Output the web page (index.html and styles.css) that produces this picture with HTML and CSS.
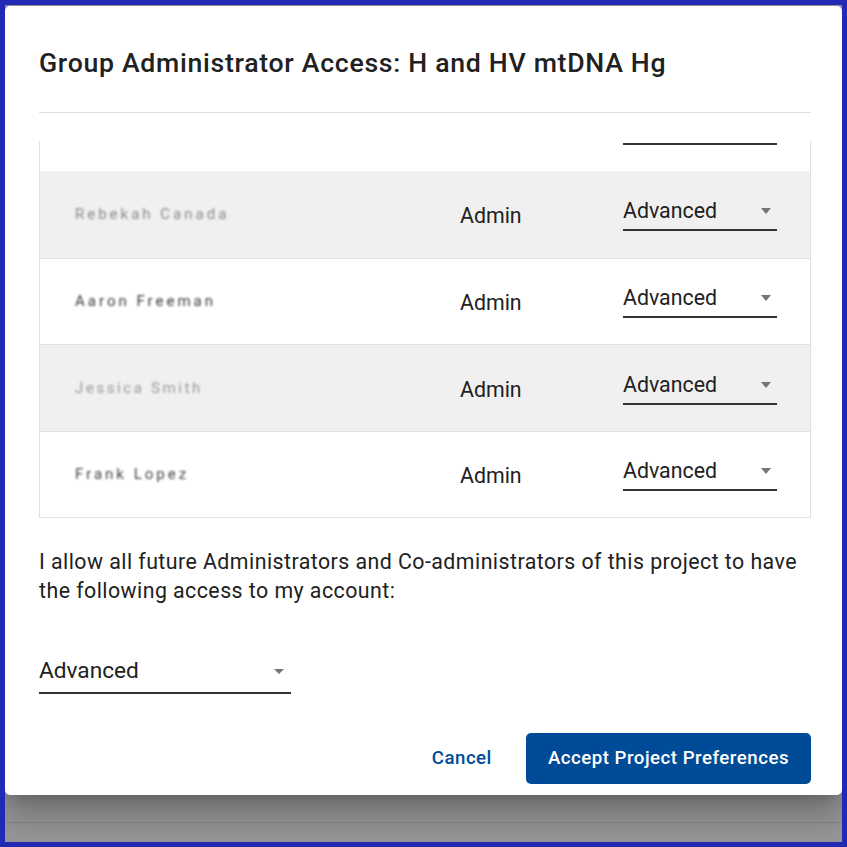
FILE: index.html
```html
<!DOCTYPE html>
<html lang="en">
<head>
<meta charset="utf-8">
<title>Group Administrator Access</title>
<link rel="stylesheet" href="styles.css">
</head>
<body>
<div class="frame">
  <div class="dialog">
    <h1 class="title">Group Administrator Access: H and HV mtDNA Hg</h1>
    <div class="divider"></div>
    <div class="table-scroll">
      <div class="rows">
        <div class="row">
          <div class="name"></div>
          <div class="role"></div>
          <div class="select"><span>&nbsp;</span></div>
        </div>
        <div class="row shade">
          <div class="name n1">Rebekah Canada</div>
          <div class="role">Admin</div>
          <div class="select"><span>Advanced</span><span class="arrow"></span></div>
        </div>
        <div class="row lined">
          <div class="name n2">Aaron Freeman</div>
          <div class="role">Admin</div>
          <div class="select"><span>Advanced</span><span class="arrow"></span></div>
        </div>
        <div class="row shade lined">
          <div class="name n3">Jessica Smith</div>
          <div class="role">Admin</div>
          <div class="select"><span>Advanced</span><span class="arrow"></span></div>
        </div>
        <div class="row lined last">
          <div class="name n4">Frank Lopez</div>
          <div class="role">Admin</div>
          <div class="select"><span>Advanced</span><span class="arrow"></span></div>
        </div>
      </div>
    </div>
    <p class="note">I allow all future Administrators and Co-administrators of this project to have the following access to my account:</p>
    <div class="select big"><span>Advanced</span><span class="arrow small"></span></div>
    <div class="actions">
      <button class="btn-text">Cancel</button>
      <button class="btn-primary">Accept Project Preferences</button>
    </div>
  </div>
</div>
</body>
</html>
```
FILE: styles.css
```css
html, body {
  margin: 0;
  padding: 0;
}

body {
  font-family: Roboto, "Liberation Sans", sans-serif;
  color: #212121;
  background: #999;
}

.frame {
  width: 847px;
  height: 847px;
  box-sizing: border-box;
  border: 5px solid #2229b5;
  overflow: hidden;
  background: linear-gradient(to bottom, #999 0, #999 817px, #8a8a8a 817px, #8a8a8a 818px, #999 818px);
}

.dialog {
  margin-top: 1px;
  background: #fff;
  border-radius: 5px;
  padding: 0 31px 11.33px 34px;
  box-shadow: 0 11px 15px -7px rgba(0,0,0,.2), 0 24px 38px 3px rgba(0,0,0,.14), 0 9px 46px 8px rgba(0,0,0,.12);
}

.title {
  margin: 0;
  padding-top: 37px;
  font-size: 26.67px;
  line-height: 40px;
  font-weight: 500;
  letter-spacing: 0.7px;
  color: #212121;
}

.divider {
  margin-top: 29px;
  height: 1px;
  background: #e0e0e0;
}

.table-scroll {
  margin-top: 28px;
  height: 377px;
  box-sizing: border-box;
  overflow: hidden;
  border-left: 1px solid #e0e0e0;
  border-right: 1px solid #e0e0e0;
  border-bottom: 1px solid #e0e0e0;
}

.rows {
  margin-top: -56.67px;
}

.row {
  height: 86.67px;
  box-sizing: border-box;
  display: grid;
  grid-template-columns: 385px 163px 154px;
  align-items: center;
  padding: 0 33px 0 35px;
  background: #fff;
}

.row.shade {
  background: #f0f0f0;
}

.row.lined {
  border-top: 1px solid #e0e0e0;
}

.row.last {
  border-bottom: 1px solid #e0e0e0;
}

.name {
  font-size: 15px;
  letter-spacing: 3px;
  filter: blur(1px);
  color: #444;
}

.n1 { color: #8a8a8a; }
.n2 { color: #3a3a3a; }
.n3 { color: #9a9a9a; letter-spacing: 2.6px; }
.n4 { color: #444; }

.role {
  font-size: 21.33px;
  line-height: 25px;
  padding-top: 2px;
  color: #212121;
}

.select {
  display: flex;
  align-items: center;
  justify-content: space-between;
  border-bottom: 2px solid #333;
  padding: 1px 6px 6px 0;
  font-size: 21.33px;
  line-height: 25px;
  color: #212121;
}

.arrow {
  width: 0;
  height: 0;
  border-left: 5.5px solid transparent;
  border-right: 5.5px solid transparent;
  border-top: 6px solid #757575;
}

.arrow.small {
  border-left-width: 5px;
  border-right-width: 5px;
  border-top-width: 5px;
}

.note {
  margin: 29px 0 0;
  font-size: 21.33px;
  line-height: 29.33px;
  letter-spacing: 0.455px;
  color: #212121;
}

.select.big {
  width: 252px;
  box-sizing: border-box;
  margin-top: 52.33px;
  font-size: 22.67px;
  line-height: 26.5px;
  padding: 0 7px 7.5px 0;
}

.actions {
  margin-top: 39px;
  display: flex;
  justify-content: flex-end;
  align-items: center;
}

.btn-text,
.btn-primary {
  font-family: Roboto, "Liberation Sans", sans-serif;
  font-size: 18.67px;
  font-weight: 500;
  letter-spacing: 0.5px;
  height: 50.67px;
  border: none;
  cursor: pointer;
}

.btn-text {
  background: transparent;
  color: #004b98;
  padding: 0 21.33px;
  margin-right: 12.7px;
}

.btn-primary {
  background: #004b98;
  color: #fff;
  border-radius: 5px;
  padding: 0 22px;
}
```
